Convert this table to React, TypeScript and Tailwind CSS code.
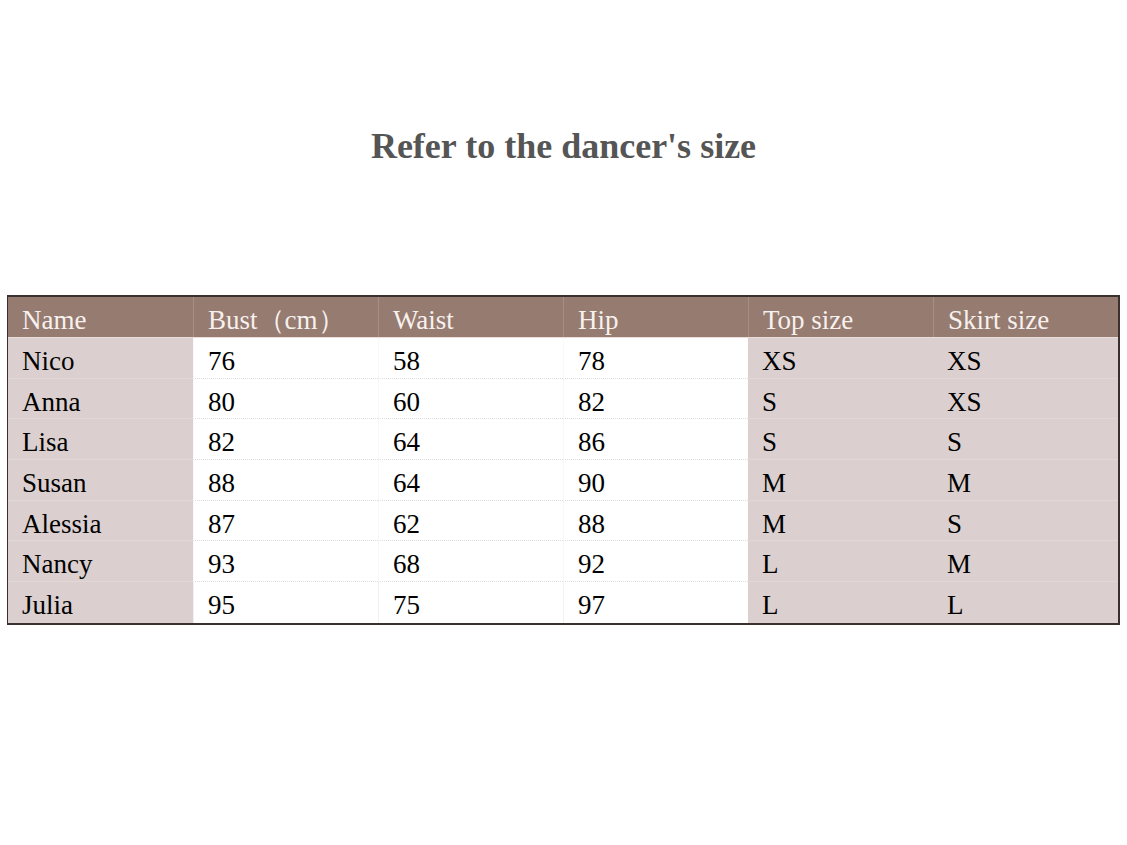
const headers = ["Name", "Bust（cm）", "Waist", "Hip", "Top size", "Skirt size"];

const rows: string[][] = [
  ["Nico", "76", "58", "78", "XS", "XS"],
  ["Anna", "80", "60", "82", "S", "XS"],
  ["Lisa", "82", "64", "86", "S", "S"],
  ["Susan", "88", "64", "90", "M", "M"],
  ["Alessia", "87", "62", "88", "M", "S"],
  ["Nancy", "93", "68", "92", "L", "M"],
  ["Julia", "95", "75", "97", "L", "L"],
];

// columns 0, 4 and 5 are shaded
const shaded = (i: number) => i === 0 || i >= 4;

export default function App() {
  return (
    <div
      className="w-[1127px] h-[845px] bg-white"
      style={{ fontFamily: '"Liberation Serif", "Times New Roman", serif' }}
    >
      <h1 className="pt-[128px] text-center text-[36px] leading-[36px] font-bold text-[#555555]">
        Refer to the dancer's size
      </h1>

      <div className="mt-[131px] ml-[7px] w-[1113px] border-t-2 border-r-2 border-b-2 border-l-[1.5px] border-[#3a302e]">
        <div className="grid grid-cols-6 bg-[#967b71]">
          {headers.map((h, i) => (
            <div
              key={h}
              className={`h-[40px] pt-[6px] pl-[14px] text-[27px] leading-[34px] text-[#f7f1ee] ${
                i > 0 ? "border-l border-[#a88f86]" : ""
              }`}
            >
              {h}
            </div>
          ))}
        </div>
        <div className="h-px bg-[#e9dcd9]" />
        {rows.map((row, r) => (
          <div key={row[0]} className="grid grid-cols-6">
            {row.map((cell, i) => (
              <div
                key={i}
                className={`h-[40.7px] pt-[6px] pl-[14px] text-[27px] leading-[34px] text-black ${
                  shaded(i) ? "bg-[#dbd0cf]" : "bg-white"
                } ${i === 1 || i === 2 || i === 3 ? "border-l border-[#f1f1f1]" : ""} ${
                  r < rows.length - 1
                    ? shaded(i)
                      ? "border-b border-[#e1d8d7]"
                      : "border-b border-dotted border-b-[#dcdcdc]"
                    : ""
                }`}
              >
                {cell}
              </div>
            ))}
          </div>
        ))}
      </div>
    </div>
  );
}
